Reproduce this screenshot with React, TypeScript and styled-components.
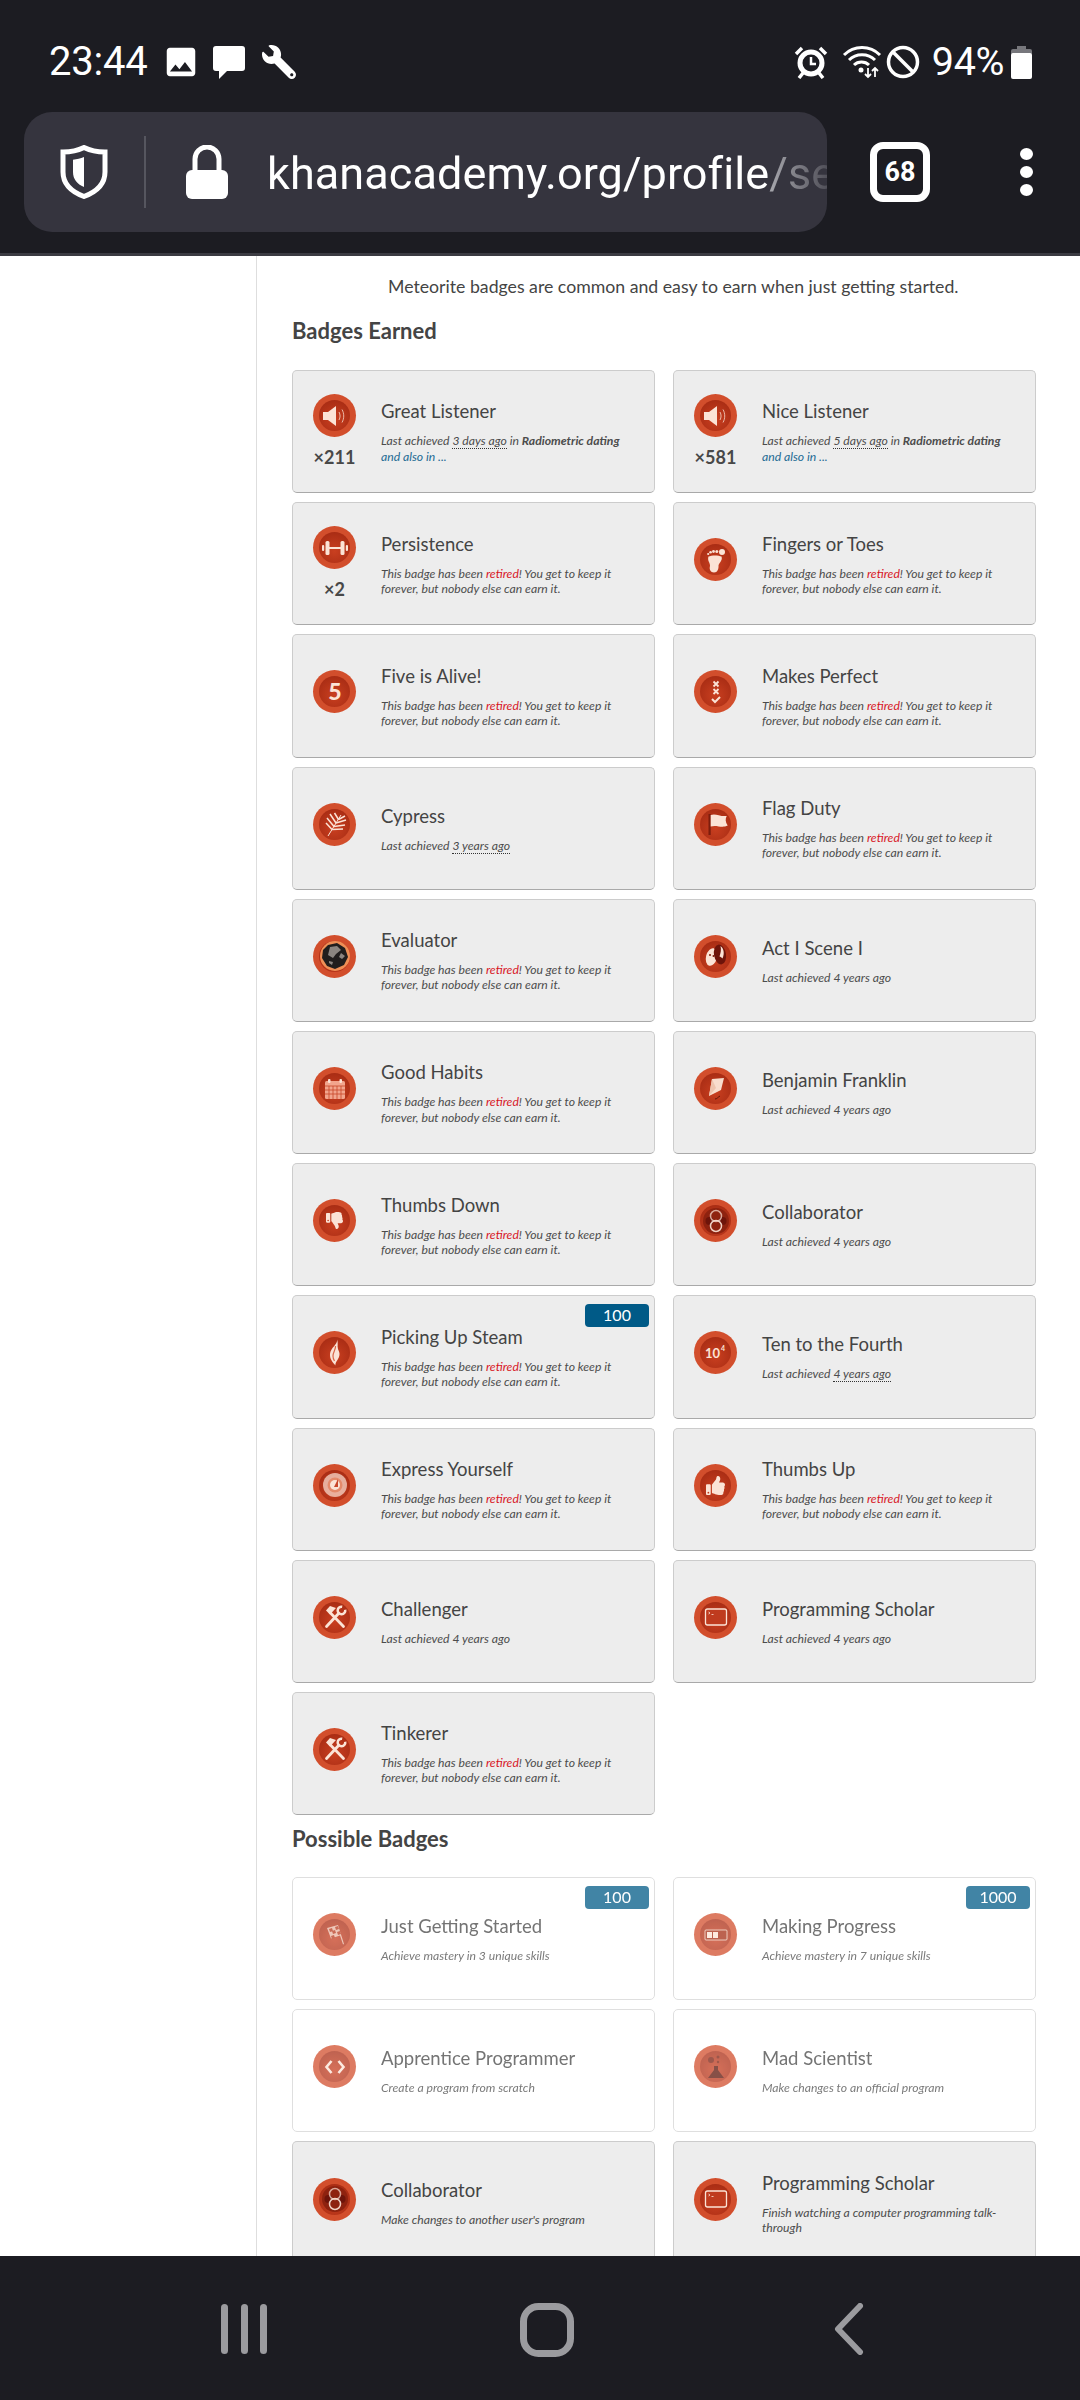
import React, { FC, ReactNode } from 'react';
import styled, { createGlobalStyle } from 'styled-components';
import { FaThumbsDown, FaThumbsUp, FaWrench } from 'react-icons/fa';
import { MdImage } from 'react-icons/md';

const GlobalStyle = createGlobalStyle`
  html, body {
    margin: 0;
    padding: 0;
    background: #fff;
  }
  * {
    box-sizing: border-box;
  }
`;

const Screen = styled.div`
  width: 1080px;
  height: 2400px;
  display: flex;
  flex-direction: column;
  overflow: hidden;
  font-family: Lato, 'Open Sans', sans-serif;
  color: #444;
`;

const Header = styled.header`
  flex: none;
  height: 256px;
  background: #1c1c22;
  border-bottom: 3px solid #3b3b42;
  color: #fff;
  font-family: Roboto, sans-serif;
`;

const StatusBar = styled.div`
  height: 112px;
  padding: 0 48px 0 49px;
  display: flex;
  align-items: flex-start;
  justify-content: space-between;
`;

const StatusGroup = styled.div`
  display: flex;
  align-items: center;
  height: 40px;
  margin-top: 42px;
`;

const Clock = styled.span`
  font-size: 40px;
  line-height: 40px;
  margin-right: 14px;
  letter-spacing: -0.2px;
`;

const Percent = styled.span`
  font-size: 39.500px;
  line-height: 40px;
  margin: 0 7px 0 12px;
  letter-spacing: -0.4px;
`;

const StatusIcon = styled.svg<{ $gap?: number }>`
  display: block;
  flex: none;
  margin-right: ${(p) => p.$gap ?? 0}px;
`;

const StatusWrench = styled(FaWrench)`
  display: block;
  flex: none;
  transform: scaleX(-1);
`;

const ToolBar = styled.div`
  height: 120px;
  padding-left: 24px;
  display: flex;
  align-items: center;
`;

const UrlBar = styled.div`
  width: 803px;
  height: 120px;
  background: #35343e;
  border-radius: 28px;
  display: flex;
  align-items: center;
  padding-left: 36px;
  overflow: hidden;
`;

const UrlDivider = styled.div`
  width: 2px;
  height: 72px;
  background: #56565f;
  margin: 0 40px 0 36px;
  flex: none;
`;

const UrlText = styled.div`
  flex: 1;
  margin-left: 39px;
  padding-top: 3px;
  font-size: 45px;
  line-height: 60px;
  letter-spacing: 0.08px;
  white-space: nowrap;
  overflow: hidden;
  -webkit-mask-image: linear-gradient(to right, #000 90%, rgba(0, 0, 0, 0.25) 100%);
  mask-image: linear-gradient(to right, #000 90%, rgba(0, 0, 0, 0.25) 100%);
`;

const UrlRest = styled.span`
  color: #a5a5ab;
`;

const TabCount = styled.div`
  width: 60px;
  height: 60px;
  margin-left: 43px;
  border: 7px solid #fff;
  border-radius: 13px;
  display: flex;
  align-items: center;
  justify-content: center;
  font-size: 27px;
  font-weight: 700;
`;

const MoreButton = styled.div`
  margin-left: 90px;
  display: flex;
  flex-direction: column;
  gap: 6px;
`;

const MoreDot = styled.div`
  width: 13px;
  height: 12px;
  border-radius: 50%;
  background: #fff;
`;

const Content = styled.main`
  flex: 1;
  min-height: 0;
  display: flex;
  overflow: hidden;
`;

const Sidebar = styled.aside`
  flex: none;
  width: 257px;
  border-right: 1px solid #dedede;
`;

const Section = styled.div`
  flex: 1;
  padding: 20px 0 0 35px;
`;

const Intro = styled.p`
  margin: 0 0 20px 96px;
  font-size: 17.700px;
  line-height: 22px;
  white-space: nowrap;
`;

const SectionTitle = styled.h2<{ $gap: number }>`
  margin: 0 0 ${(p) => p.$gap}px;
  font-size: 22px;
  line-height: 26px;
  font-weight: 700;
`;

const BadgeGrid = styled.div`
  display: grid;
  grid-template-columns: 363px 363px;
  grid-auto-rows: 123.200px;
  column-gap: 18px;
  row-gap: 9px;
  margin-bottom: 11px;
`;

const Card = styled.div<{ $faded?: boolean }>`
  position: relative;
  display: flex;
  align-items: center;
  padding-left: 20px;
  border-radius: 5px;
  background: ${(p) => (p.$faded ? '#fff' : '#ededed')};
  border: 1.500px solid ${(p) => (p.$faded ? '#d4d4d4' : '#ccc')};
  border-bottom-color: ${(p) => (p.$faded ? '#d4d4d4' : '#a9a9a9')};
  opacity: ${(p) => (p.$faded ? 0.74 : 1)};
`;

const MedalColumn = styled.div`
  flex: none;
  width: 43px;
  margin-right: 25px;
  display: flex;
  flex-direction: column;
  align-items: center;
`;

const MedalDisc = styled.div`
  position: relative;
  width: 43px;
  height: 43px;
  margin-bottom: 8px;
  border-radius: 50%;
  background: radial-gradient(circle, #d24e2c 0, #d24e2c 86%, #e67e5d 100%);
  display: flex;
  align-items: center;
  justify-content: center;
  color: #fbe3d6;

  &::before {
    content: '';
    position: absolute;
    inset: 6px;
    border-radius: 50%;
    background: radial-gradient(circle at 50% 62%, #c93f20 0, #a62b13 85%);
  }

  svg {
    position: relative;
    display: block;
  }
`;

const Count = styled.div`
  font-size: 18px;
  line-height: 24px;
  font-weight: 700;
  white-space: nowrap;
  color: #484848;
`;

const CardText = styled.div`
  width: 250px;
`;

const CardTitle = styled.div`
  font-size: 18.500px;
  line-height: 24px;
  margin-bottom: 10px;
  white-space: nowrap;
`;

const CardDescription = styled.div`
  font-size: 12.200px;
  line-height: 15.200px;
  font-style: italic;
  color: #4c4c4c;
`;

const Retired = styled.span`
  color: #d8141f;
`;

const TimeAgo = styled.span`
  border-bottom: 1px dotted #333;
`;

const Exercise = styled.strong`
  font-weight: 700;
`;

const MoreLink = styled.span`
  color: #1c6a93;
`;

const PointsPill = styled.div`
  position: absolute;
  top: 8px;
  right: 5px;
  width: 64px;
  height: 23px;
  border-radius: 4px;
  background: #005a87;
  color: #fff;
  font-size: 16px;
  line-height: 21px;
  text-align: center;
`;

const Footer = styled.footer`
  flex: none;
  height: 144px;
  background: #1c1c22;
  display: flex;
  align-items: flex-start;
  padding-top: 47px;
`;

const NavIcon = styled.svg<{ $left: number }>`
  display: block;
  flex: none;
  margin-left: ${(p) => p.$left}px;
`;

const Glyph: FC<{ children: ReactNode }> = ({ children }) => (
  <svg width="32" height="32" viewBox="0 0 32 32" fill="currentColor">
    {children}
  </svg>
);

const glyphs: Record<string, ReactNode> = {
  speaker: (
    <Glyph>
      <path d="M4 12h5l8-6v20l-8-6H4z" />
      <path d="M20 12c1.400 2.600 1.400 5.400 0 8M23 9.500c2.300 4 2.300 9 0 13" fill="none" stroke="currentColor" strokeWidth="1" opacity=".75" />
    </Glyph>
  ),
  dumbbell: (
    <Glyph>
      <rect x="3" y="13" width="2.200" height="6" rx="1" />
      <rect x="6.500" y="9" width="4" height="14" rx="1.500" />
      <rect x="10" y="15" width="12" height="2" />
      <rect x="21.500" y="9" width="4" height="14" rx="1.500" />
      <rect x="26.800" y="13" width="2.200" height="6" rx="1" />
    </Glyph>
  ),
  foot: (
    <Glyph>
      <path d="M8.500 12.500c3-1.500 10-1.500 13 0 1.500 4-2.500 6-3 9 .3 3.500-1 7-4.500 7s-5-3-4-6.500c.5-3-3-5-1.500-9.500z" />
      <circle cx="22" cy="8" r="3" />
      <circle cx="16.800" cy="7.500" r="1.500" />
      <circle cx="13.500" cy="7.500" r="1.400" />
      <circle cx="10.600" cy="8.300" r="1.300" />
      <circle cx="8.200" cy="10" r="1.100" />
    </Glyph>
  ),
  five: (
    <Glyph>
      <text x="16" y="24" fontFamily="Lato, sans-serif" fontSize="23" fontWeight="900" textAnchor="middle">5</text>
    </Glyph>
  ),
  perfect: (
    <Glyph>
      <path d="M13.500 5.500l5 5M18.500 5.500l-5 5M13.500 13l5 5M18.500 13l-5 5" fill="none" stroke="currentColor" strokeWidth="1.800" />
      <path d="M12 23l3 3 5-5" fill="none" stroke="currentColor" strokeWidth="2" />
    </Glyph>
  ),
  palm: (
    <Glyph>
      <path d="M9 28L22 7" fill="none" stroke="currentColor" strokeWidth="1" />
      <path d="M13 21.500L7 15M15 18.500L8 10M17 15L11 6M19.500 11.500L15.500 5M13 21.500L24 21M15 18.500L26 17M17 15L27 12M19.500 11.500L26 8" fill="none" stroke="currentColor" strokeWidth="1.500" />
    </Glyph>
  ),
  meteor: (
    <Glyph>
      <circle cx="16" cy="16" r="15" fill="#ef8f56" />
      <path d="M9 5l9-2 8 5 3 9-4 8-9 4-8-3-5-8 1-8z" fill="#211e1d" />
      <path d="M11 7l7-1 4 4-5 4-3 4-5-3zM22 13l4 3-3 3-3-2zM10 21l4 1-1 3-3-2z" fill="#8b8580" />
    </Glyph>
  ),
  flag: (
    <Glyph>
      <rect x="8.500" y="6" width="2.200" height="21" fill="#7c1d0d" />
      <path d="M10.700 7c5-2 8 1.500 16 1-1.500 3-1.500 6 1 9.500-6 3-11-1-17 1z" />
    </Glyph>
  ),
  masks: (
    <Glyph>
      <ellipse cx="11.500" cy="17" rx="5.500" ry="9" transform="rotate(14 11.500 17)" />
      <ellipse cx="20" cy="14.500" rx="6" ry="10" transform="rotate(-10 20 14.500)" fill="#6e140a" />
      <path d="M20.500 6c3 2 4.500 7 2 12.500-1-1-2-2-3-2 1-3 2-7 1-10.500z" />
      <circle cx="10" cy="15" r="1" fill="#7c1d0d" />
      <circle cx="13.500" cy="16" r="1" fill="#7c1d0d" />
    </Glyph>
  ),
  calendar: (
    <Glyph>
      <rect x="6" y="8" width="20" height="18" rx="1.500" fill="#f2a58d" />
      <path d="M6 13h20M6 17h20M6 21h20M10 13v13M14 13v13M18 13v13M22 13v13" stroke="#c8462a" strokeWidth=".8" />
      <rect x="9" y="6" width="2.500" height="4" rx="1" />
      <rect x="20.500" y="6" width="2.500" height="4" rx="1" />
    </Glyph>
  ),
  thumbsDown: <FaThumbsDown size={17} />,
  thumbsUp: <FaThumbsUp size={19} />,
  flame: (
    <Glyph>
      <path d="M18 2.500c1 5-6.500 8-7 14.500-.3 5 2.500 8 5.500 11.500-.5-3 2-5 3.500-8.500 1.500-4-.5-6-1-8-1-3 .5-6-1-9.500z" />
      <path d="M16.500 9c.5 3-2.500 6-2.500 10 0 2 .5 3.500 1.500 5" fill="none" stroke="#d9684a" strokeWidth="1.200" />
    </Glyph>
  ),
  kite: (
    <Glyph>
      <path d="M12 6l12-1-3 12-12 6z" fill="#f8ddcd" />
      <path d="M12 6l4 9-7 8z" fill="#eec4ae" />
      <path d="M15 26c2 0 3-2 5-3" fill="none" stroke="#5e1408" strokeWidth="1" />
    </Glyph>
  ),
  collaborate: (
    <Glyph>
      <circle cx="16" cy="16" r="13" fill="#8e220f" />
      <circle cx="9.500" cy="16" r="4" fill="#6e140a" />
      <circle cx="22.500" cy="16" r="4" fill="#6e140a" />
      <circle cx="16" cy="11" r="5.500" fill="none" stroke="currentColor" strokeWidth="1.500" opacity=".7" />
      <circle cx="16" cy="21" r="5.500" fill="none" stroke="currentColor" strokeWidth="1.500" opacity=".9" />
    </Glyph>
  ),
  screen: (
    <Glyph>
      <rect x="5.500" y="8" width="21" height="16" rx="2" fill="#bf3b1e" stroke="currentColor" strokeWidth="1.300" />
      <path d="M8.500 11l1.500 1-1.500 1M11.500 13.500h2" fill="none" stroke="currentColor" strokeWidth=".8" />
    </Glyph>
  ),
  gauge: (
    <Glyph>
      <circle cx="16" cy="16" r="12" opacity=".7" />
      <circle cx="16" cy="16" r="7.500" fill="#e48a6b" />
      <circle cx="16" cy="16" r="5" />
      <path d="M15 18l4-8 0 8z" fill="#c8462a" />
    </Glyph>
  ),
  tenFourth: (
    <Glyph>
      <text x="5" y="21" fontFamily="Lato, sans-serif" fontSize="13" fontWeight="700">10</text>
      <text x="21" y="14" fontFamily="Lato, sans-serif" fontSize="7" fontWeight="700">4</text>
    </Glyph>
  ),
  tools: (
    <Glyph>
      <path d="M24.500 25.500L11 11.500M7.500 25.500L19.800 12.200" fill="none" stroke="currentColor" strokeWidth="2.800" strokeLinecap="round" />
      <path d="M7 9.500l4-4.500 6 2-6 6.500z" />
      <path d="M26.200 8.800A3.800 3.800 0 1 1 23.200 5.800" fill="none" stroke="currentColor" strokeWidth="2.500" />
    </Glyph>
  ),
  checker: (
    <Glyph>
      <path d="M8 9l11-3 6 19-1 .5-3-9-9 3z" fill="#f8ddcd" opacity=".75" />
      <path d="M10 10l3-1 1 3-3 1zM16 8l3-1 1 3-3 1zM13 12l3-1 1 3-3 1zM12 17l3-1 1 3-3 1zM18 13l3-1 1 3-3 1z" fill="#b8381c" />
    </Glyph>
  ),
  progress: (
    <Glyph>
      <rect x="5" y="11" width="22" height="10" rx="1" fill="#a52c14" stroke="#f8ddcd" strokeWidth=".8" />
      <rect x="7" y="13" width="5" height="6" />
      <rect x="13" y="13" width="5" height="6" />
    </Glyph>
  ),
  code: (
    <Glyph>
      <path d="M12.500 10l-5 6 5 6M19.500 10l5 6-5 6" fill="none" stroke="currentColor" strokeWidth="2.600" />
    </Glyph>
  ),
  flask: (
    <Glyph>
      <path d="M14 15h4v4l6 8H8l6-8z" fill="#5e1408" />
      <circle cx="11" cy="9" r="3" fill="#7c1d0d" />
      <circle cx="18" cy="6" r="1.500" fill="#7c1d0d" />
      <circle cx="18" cy="11" r="1.200" fill="#7c1d0d" />
    </Glyph>
  )
};

type Badge = {
  title: string;
  glyph: string;
  count?: string;
  kind?: 'retired' | 'exercise';
  ago?: string;
  dotted?: boolean;
  text?: string;
  points?: number;
  faded?: boolean;
};

const earned: Badge[] = [
  { title: 'Great Listener', glyph: 'speaker', count: '×211', kind: 'exercise', ago: '3 days ago' },
  { title: 'Nice Listener', glyph: 'speaker', count: '×581', kind: 'exercise', ago: '5 days ago' },
  { title: 'Persistence', glyph: 'dumbbell', count: '×2', kind: 'retired' },
  { title: 'Fingers or Toes', glyph: 'foot', kind: 'retired' },
  { title: 'Five is Alive!', glyph: 'five', kind: 'retired' },
  { title: 'Makes Perfect', glyph: 'perfect', kind: 'retired' },
  { title: 'Cypress', glyph: 'palm', ago: '3 years ago', dotted: true },
  { title: 'Flag Duty', glyph: 'flag', kind: 'retired' },
  { title: 'Evaluator', glyph: 'meteor', kind: 'retired' },
  { title: 'Act I Scene I', glyph: 'masks', ago: '4 years ago' },
  { title: 'Good Habits', glyph: 'calendar', kind: 'retired' },
  { title: 'Benjamin Franklin', glyph: 'kite', ago: '4 years ago' },
  { title: 'Thumbs Down', glyph: 'thumbsDown', kind: 'retired' },
  { title: 'Collaborator', glyph: 'collaborate', ago: '4 years ago' },
  { title: 'Picking Up Steam', glyph: 'flame', kind: 'retired', points: 100 },
  { title: 'Ten to the Fourth', glyph: 'tenFourth', ago: '4 years ago', dotted: true },
  { title: 'Express Yourself', glyph: 'gauge', kind: 'retired' },
  { title: 'Thumbs Up', glyph: 'thumbsUp', kind: 'retired' },
  { title: 'Challenger', glyph: 'tools', ago: '4 years ago' },
  { title: 'Programming Scholar', glyph: 'screen', ago: '4 years ago' },
  { title: 'Tinkerer', glyph: 'tools', kind: 'retired' }
];

const possible: Badge[] = [
  { title: 'Just Getting Started', glyph: 'checker', text: 'Achieve mastery in 3 unique skills', points: 100, faded: true },
  { title: 'Making Progress', glyph: 'progress', text: 'Achieve mastery in 7 unique skills', points: 1000, faded: true },
  { title: 'Apprentice Programmer', glyph: 'code', text: 'Create a program from scratch', faded: true },
  { title: 'Mad Scientist', glyph: 'flask', text: 'Make changes to an official program', faded: true },
  { title: 'Collaborator', glyph: 'collaborate', text: "Make changes to another user's program" },
  { title: 'Programming Scholar', glyph: 'screen', text: 'Finish watching a computer programming talk-through' }
];

const Description: FC<{ badge: Badge }> = ({ badge }) => {
  if (badge.text) return <>{badge.text}</>;
  if (badge.kind === 'retired') {
    return (
      <>
        This badge has been <Retired>retired</Retired>! You get to keep it forever, but nobody else can earn it.
      </>
    );
  }
  if (badge.kind === 'exercise') {
    return (
      <>
        Last achieved <TimeAgo>{badge.ago}</TimeAgo> in <Exercise>Radiometric dating</Exercise>{' '}
        <MoreLink>and also in ...</MoreLink>
      </>
    );
  }
  return (
    <>
      Last achieved {badge.dotted ? <TimeAgo>{badge.ago}</TimeAgo> : badge.ago}
    </>
  );
};

const BadgeCard: FC<{ badge: Badge }> = ({ badge }) => (
  <Card $faded={badge.faded}>
    {badge.points && <PointsPill>{badge.points}</PointsPill>}
    <MedalColumn>
      <MedalDisc>{glyphs[badge.glyph]}</MedalDisc>
      {badge.count && <Count>{badge.count}</Count>}
    </MedalColumn>
    <CardText>
      <CardTitle>{badge.title}</CardTitle>
      <CardDescription>
        <Description badge={badge} />
      </CardDescription>
    </CardText>
  </Card>
);

const App: FC = () => {
  return (
    <Screen>
      <GlobalStyle />
      <Header>
        <StatusBar>
          <StatusGroup>
            <Clock>23:44</Clock>
            <StatusIcon as={MdImage} size={38} $gap={12} />
            <StatusIcon width="34" height="34" viewBox="0 0 34 34" fill="#fff" $gap={16}>
              <path d="M4 1h26a3 3 0 0 1 3 3v19a3 3 0 0 1-3 3H15l-8 8v-8H4a3 3 0 0 1-3-3V4a3 3 0 0 1 3-3z" />
            </StatusIcon>
            <StatusWrench size={34} />
          </StatusGroup>
          <StatusGroup>
            <StatusIcon width="34" height="34" viewBox="0 0 34 34" fill="none" $gap={14}>
              <circle cx="17" cy="18" r="11" stroke="#fff" strokeWidth="5" />
              <path d="M17 12v7h5" stroke="#fff" strokeWidth="2.500" />
              <path d="M2 9l6-6M32 9l-6-6M9 28l-4 5M25 28l4 5" stroke="#fff" strokeWidth="3.500" />
            </StatusIcon>
            <StatusIcon width="40" height="34" viewBox="0 0 40 34" fill="none" $gap={4}>
              <path d="M2 10c10-10 26-10 36 0M7 15c7-7 19-7 26 0M12 20c4-4 11-4 15 0" stroke="#fff" strokeWidth="3" />
              <circle cx="19" cy="25" r="2.500" fill="#fff" />
              <path d="M26 23v9M23 29l3 3 3-3M33 32v-9M30 26l3-3 3 3" stroke="#fff" strokeWidth="1.800" />
            </StatusIcon>
            <StatusIcon width="34" height="34" viewBox="0 0 34 34" fill="none">
              <circle cx="17" cy="17" r="14.500" stroke="#fff" strokeWidth="3.500" />
              <path d="M7 7l20 20" stroke="#fff" strokeWidth="3.500" />
            </StatusIcon>
            <Percent>94%</Percent>
            <StatusIcon width="21" height="33" viewBox="0 0 21 33">
              <rect x="6" y="0" width="9" height="4" fill="#77777c" />
              <rect x="0" y="3" width="21" height="6" rx="2" fill="#77777c" />
              <rect x="0" y="7" width="21" height="26" rx="2" fill="#fff" />
            </StatusIcon>
          </StatusGroup>
        </StatusBar>
        <ToolBar>
          <UrlBar>
            <StatusIcon width="48" height="54" viewBox="0 0 48 54" fill="none">
              <path d="M24 2.500c6 3 13 4.500 21 4.500v20c0 13-9 20-21 24.500C12 47 3 40 3 27V7c8 0 15-1.500 21-4.500z" stroke="#fff" strokeWidth="5" />
              <path d="M24 12c-3.500 1.500-7 2.300-11 2.700V27c0 7 4 12 11 15z" fill="#fff" />
            </StatusIcon>
            <UrlDivider />
            <StatusIcon width="42" height="54" viewBox="0 0 42 54" fill="none">
              <path d="M9 28V14a12 12 0 0 1 24 0v14" stroke="#fff" strokeWidth="5" />
              <rect x="0" y="25" width="42" height="29" rx="6" fill="#fff" />
            </StatusIcon>
            <UrlText>
              khanacademy.org/profile<UrlRest>/se</UrlRest>
            </UrlText>
          </UrlBar>
          <TabCount>68</TabCount>
          <MoreButton>
            <MoreDot />
            <MoreDot />
            <MoreDot />
          </MoreButton>
        </ToolBar>
      </Header>
      <Content>
        <Sidebar />
        <Section>
          <Intro>Meteorite badges are common and easy to earn when just getting started.</Intro>
          <SectionTitle $gap={26}>Badges Earned</SectionTitle>
          <BadgeGrid>
            {earned.map((badge) => (
              <BadgeCard key={badge.title} badge={badge} />
            ))}
          </BadgeGrid>
          <SectionTitle $gap={25}>Possible Badges</SectionTitle>
          <BadgeGrid>
            {possible.map((badge) => (
              <BadgeCard key={badge.title} badge={badge} />
            ))}
          </BadgeGrid>
        </Section>
      </Content>
      <Footer>
        <NavIcon width="47" height="52" viewBox="0 0 47 52" fill="#9b9b9f" $left={221}>
          <rect x="0" y="1" width="7" height="50" rx="3.500" />
          <rect x="20" y="1" width="7" height="50" rx="3.500" />
          <rect x="39" y="1" width="7" height="50" rx="3.500" />
        </NavIcon>
        <NavIcon width="54" height="54" viewBox="0 0 54 54" fill="none" $left={252}>
          <rect x="3.500" y="3.500" width="47" height="47" rx="15" stroke="#9b9b9f" strokeWidth="7" />
        </NavIcon>
        <NavIcon width="30" height="52" viewBox="0 0 30 52" fill="none" $left={260}>
          <path d="M26 3L4 26l22 23" stroke="#9b9b9f" strokeWidth="6" strokeLinecap="round" strokeLinejoin="round" />
        </NavIcon>
      </Footer>
    </Screen>
  );
};

export default App;
